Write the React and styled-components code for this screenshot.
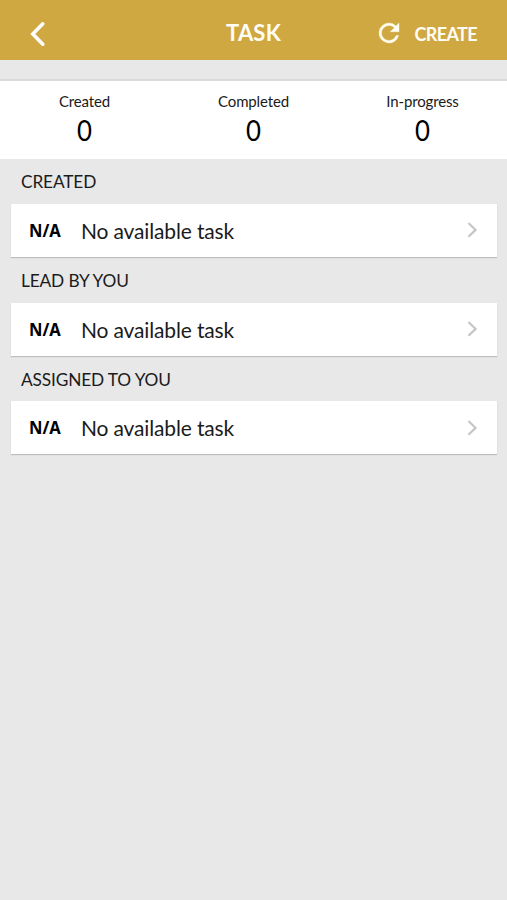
import React from "react";
import styled, { createGlobalStyle } from "styled-components";

const stats = [
  { label: "Created", value: 0 },
  { label: "Completed", value: 0 },
  { label: "In-progress", value: 0 },
];

const sections = ["CREATED", "LEAD BY YOU", "ASSIGNED TO YOU"];

const App = () => {
  return (
    <>
      <GlobalStyle />
      <Page>
        <Header>
          <BackButton aria-label="Back">
            <svg width="18" height="28" viewBox="0 0 18 28">
              <path
                d="M14.8 3.8 4.8 14l10 10.2"
                fill="none"
                stroke="#fff"
                strokeWidth="3.6"
                strokeLinecap="round"
              />
            </svg>
          </BackButton>
          <Title>TASK</Title>
          <Actions>
            <IconButton aria-label="Refresh">
              <svg width="30" height="30" viewBox="0 0 24 24">
                <path
                  fill="#fffdf0"
                  stroke="#fffdf0"
                  strokeWidth="0.3"
                  d="M17.65 6.35A7.958 7.958 0 0 0 12 4a8 8 0 1 0 7.73 10h-2.08A6 6 0 1 1 12 6c1.66 0 3.14.69 4.22 1.78L13 11h7V4l-2.35 2.35z"
                />
              </svg>
            </IconButton>
            <CreateButton>CREATE</CreateButton>
          </Actions>
        </Header>
        <Stats>
          {stats.map((stat) => (
            <Stat key={stat.label}>
              <StatLabel>{stat.label}</StatLabel>
              <StatValue>{stat.value}</StatValue>
            </Stat>
          ))}
        </Stats>
        {sections.map((title) => (
          <Section key={title}>
            <SectionTitle>{title}</SectionTitle>
            <Card>
              <Badge>N/A</Badge>
              <TaskName>No available task</TaskName>
              <svg width="12" height="18" viewBox="0 0 12 18">
                <path
                  d="M1.4 2 8.6 8.9l-7.2 6.9"
                  fill="none"
                  stroke="#c6c6c6"
                  strokeWidth="2.2"
                />
              </svg>
            </Card>
          </Section>
        ))}
      </Page>
    </>
  );
};

const GlobalStyle = createGlobalStyle`
  * {
    box-sizing: border-box;
  }
  body {
    margin: 0;
    background: #e8e8e8;
    font-family: Lato, "Liberation Sans", sans-serif;
    color: #1b1b1b;
  }
`;

const Page = styled.div`
  min-height: 900px;
  background: #e8e8e8;
`;

const Header = styled.header`
  display: grid;
  grid-template-columns: 1fr auto 1fr;
  align-items: center;
  height: 60px;
  padding: 7px 29px 0 28px;
  background: #d0a841;
  color: #fffdf5;
`;

const Button = styled.button`
  display: flex;
  padding: 0;
  border: 0;
  background: none;
  color: inherit;
  font-family: inherit;
`;

const BackButton = styled(Button)`
  justify-self: start;
`;

const Title = styled.h1`
  margin: 0;
  padding: 0 0 2px 1px;
  font-size: 22px;
  line-height: 28px;
  font-weight: 700;
  letter-spacing: 0.2px;
`;

const Actions = styled.div`
  display: flex;
  align-items: center;
  justify-self: end;
  gap: 10px;
`;

const IconButton = styled(Button)`
  padding-bottom: 1px;
`;

const CreateButton = styled(Button)`
  padding-right: 1px;
  font-size: 18px;
  line-height: 24px;
  font-weight: 700;
  letter-spacing: -0.6px;
`;

const Stats = styled.div`
  display: grid;
  grid-template-columns: repeat(3, 1fr);
  height: 80px;
  margin-top: 19px;
  padding-top: 11px;
  border-top: 2px solid #dadada;
  background: #fff;
  text-align: center;
`;

const Stat = styled.div`
  display: flex;
  flex-direction: column;
`;

const StatLabel = styled.span`
  font-size: 15px;
  line-height: 18px;
  letter-spacing: -0.15px;
`;

const StatValue = styled.span`
  font-size: 28px;
  line-height: 40px;
  color: #000;
  transform: scaleX(0.92);
`;

const Section = styled.section`
  height: 98.8px;
  padding: 0 10px 0 11px;
`;

const SectionTitle = styled.h2`
  height: 44.8px;
  margin: 0;
  padding-left: 10px;
  font-size: 18px;
  line-height: 44.5px;
  font-weight: 400;
  letter-spacing: -0.15px;
  transform: scaleX(0.96);
  transform-origin: 10px 50%;
`;

const Card = styled.div`
  display: flex;
  align-items: center;
  height: 53px;
  padding: 0 18px;
  background: #fff;
  box-shadow: 0 1px 1px #bdbdbd;
`;

const Badge = styled.span`
  width: 52px;
  padding-bottom: 1px;
  font: 700 18px "Noto Sans", sans-serif;
  color: #000;
  transform: scaleX(0.92);
  transform-origin: left;
`;

const TaskName = styled.span`
  flex: 1;
  padding-top: 1px;
  font-size: 21px;
  line-height: 28px;
  letter-spacing: -0.15px;
`;

export default App;
